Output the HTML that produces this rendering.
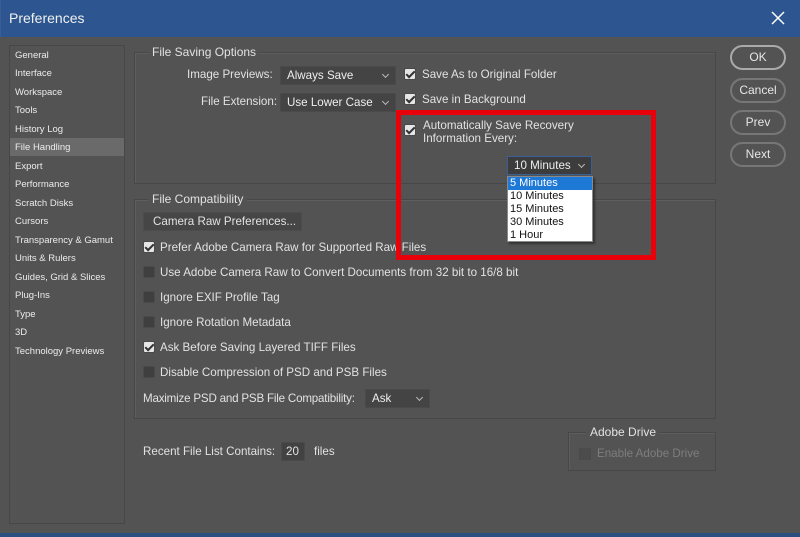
<!DOCTYPE html>
<html><head><meta charset="utf-8"><style>
*{box-sizing:border-box;margin:0;padding:0}
body{width:800px;height:537px;overflow:hidden;background:#535353;font-family:"Liberation Sans",sans-serif;color:#e2e2e2;position:relative}
.a{position:absolute;white-space:nowrap}
.title{left:0;top:0;width:800px;height:37px;background:#2d5690;border-left:1px solid #3a5f96}
.side{left:9px;top:45px;width:116px;height:479px;border:1px solid #474747;background:#535353}
.side div{position:absolute;left:5px;font-size:9.5px;color:#ececec}
.box{border:1px solid #474747;box-shadow:inset 1px 1px 0 #5e5e5e}
.leg{background:#535353;padding:0 4px;font-size:12px}
.sel{background:#444;border:1px solid #4a4a4a;font-size:11.6px;padding:2px 6px;height:19px;color:#eee}
.sel:after{content:"";position:absolute;right:7px;top:5px;width:4px;height:4px;border-right:1px solid #bbb;border-bottom:1px solid #bbb;transform:rotate(45deg)}
.cb{width:12px;height:12px;border-radius:2px;background:#3f3f3f;border:1px solid #4a4a4a}
.cb.on{background:#e6e6e6}
.cb.on:after{content:"";position:absolute;left:3px;top:0px;width:3px;height:7px;border-right:2px solid #333;border-bottom:2px solid #333;transform:rotate(45deg)}
.t{font-size:11.6px}
.btn{width:56px;height:25px;border:2px solid #777;border-radius:13px;text-align:center;font-size:12px;line-height:21px;color:#e6e6e6}
</style></head><body>
<div class="a title"><span class="a" style="left:8px;top:10px;font-size:14px;color:#f0f0f0">Preferences</span>
<svg class="a" style="left:770px;top:11px" width="14" height="14"><path d="M1 1L13 13M13 1L1 13" stroke="#fff" stroke-width="1.5"/></svg></div>
<div class="a" style="left:0;top:533px;width:800px;height:4px;background:#2d4f80"></div>
<div class="a side">
<div style="top:4px">General</div><div style="top:22px">Interface</div><div style="top:41px">Workspace</div><div style="top:59px">Tools</div><div style="top:78px">History Log</div>
<div style="top:92px;left:0;width:114px;height:18px;background:#6a6a6a"></div><div style="top:96px">File Handling</div>
<div style="top:115px">Export</div><div style="top:133px">Performance</div><div style="top:152px">Scratch Disks</div><div style="top:170px">Cursors</div><div style="top:189px">Transparency &amp; Gamut</div><div style="top:207px">Units &amp; Rulers</div><div style="top:226px">Guides, Grid &amp; Slices</div><div style="top:244px">Plug-Ins</div><div style="top:263px">Type</div><div style="top:281px">3D</div><div style="top:300px">Technology Previews</div>
</div>
<div class="a box" style="left:134px;top:52px;width:582px;height:132px"></div>
<span class="a leg" style="left:148px;top:45px">File Saving Options</span>
<span class="a t" style="left:187px;top:68px">Image Previews:</span>
<div class="a sel" style="left:280px;top:66px;width:116px">Always Save</div>
<span class="a t" style="left:201px;top:95px">File Extension:</span>
<div class="a sel" style="left:280px;top:93px;width:116px">Use Lower Case</div>
<div class="a cb on" style="left:404px;top:68px"></div><span class="a t" style="left:422px;top:68px">Save As to Original Folder</span>
<div class="a cb on" style="left:404px;top:93px"></div><span class="a t" style="left:422px;top:93px">Save in Background</span>
<div class="a cb on" style="left:404px;top:124px"></div><span class="a t" style="left:423px;top:119px;line-height:13px">Automatically Save Recovery<br>Information Every:</span>
<div class="a sel" style="left:507px;top:156px;width:85px;background:#3c3c3c;border-color:#3a5f96">10 Minutes</div>
<div class="a box" style="left:134px;top:199px;width:582px;height:220px"></div>
<span class="a leg" style="left:148px;top:192px">File Compatibility</span>
<div class="a" style="left:143px;top:212px;width:159px;height:19px;background:#464646;border:1px solid #4c4c4c;font-size:11.6px;padding:2px 9px">Camera Raw Preferences...</div>
<div class="a cb on" style="left:143px;top:241px"></div><span class="a t" style="left:160px;top:241px">Prefer Adobe Camera Raw for Supported Raw Files</span>
<div class="a cb" style="left:143px;top:266px"></div><span class="a t" style="left:160px;top:266px">Use Adobe Camera Raw to Convert Documents from 32 bit to 16/8 bit</span>
<div class="a cb" style="left:143px;top:291px"></div><span class="a t" style="left:160px;top:291px">Ignore EXIF Profile Tag</span>
<div class="a cb" style="left:143px;top:316px"></div><span class="a t" style="left:160px;top:316px">Ignore Rotation Metadata</span>
<div class="a cb on" style="left:143px;top:341px"></div><span class="a t" style="left:160px;top:341px">Ask Before Saving Layered TIFF Files</span>
<div class="a cb" style="left:143px;top:366px"></div><span class="a t" style="left:160px;top:366px">Disable Compression of PSD and PSB Files</span>
<span class="a t" style="left:143px;top:392px;letter-spacing:-0.2px">Maximize PSD and PSB File Compatibility:</span>
<div class="a sel" style="left:365px;top:389px;width:65px">Ask</div>
<span class="a t" style="left:143px;top:445px">Recent File List Contains:</span>
<div class="a" style="left:281px;top:442px;width:24px;height:19px;background:#424242;border:1px solid #4a4a4a;font-size:11.6px;padding:2px 4px">20</div>
<span class="a t" style="left:314px;top:445px">files</span>
<div class="a box" style="left:568px;top:432px;width:148px;height:39px"></div>
<span class="a leg" style="left:586px;top:425px">Adobe Drive</span>
<div class="a cb" style="left:579px;top:448px;background:#4c4c4c"></div><span class="a t" style="left:597px;top:447px;color:#7e7e7e">Enable Adobe Drive</span>
<div class="a btn" style="left:730px;top:45px;border-color:#aaa">OK</div>
<div class="a btn" style="left:730px;top:78px">Cancel</div>
<div class="a btn" style="left:730px;top:110px">Prev</div>
<div class="a btn" style="left:730px;top:142px">Next</div>
<div class="a" style="left:396px;top:110px;width:260px;height:150px;border:5px solid #e8000b"></div>
<div class="a" style="left:507px;top:176px;width:86px;height:66px;background:#fff;border:1px solid #8a8a8a;font-size:11px;color:#111;line-height:13px;box-shadow:2px 2px 2px rgba(0,0,0,.4)">
<div style="background:#1e78d6;color:#fff;padding-left:2px">5 Minutes</div>
<div style="padding-left:2px">10 Minutes</div><div style="padding-left:2px">15 Minutes</div><div style="padding-left:2px">30 Minutes</div><div style="padding-left:2px">1 Hour</div></div>
</body></html>
